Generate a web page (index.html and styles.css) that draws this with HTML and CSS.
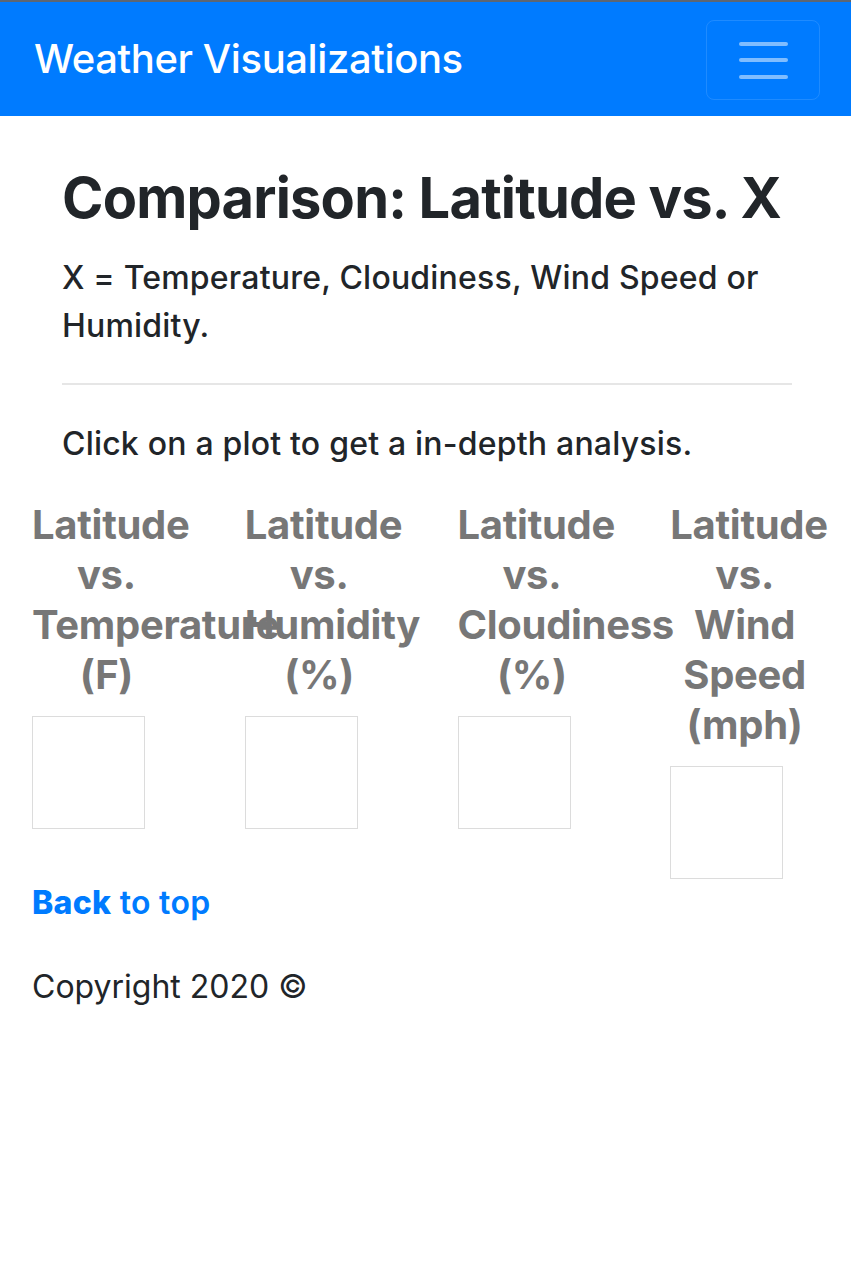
FILE: index.html
```html
<!DOCTYPE html>
<html lang="en">
<head>
<meta charset="utf-8">
<title>Weather Visualizations</title>
<link rel="stylesheet" href="styles.css">
</head>
<body>
<nav class="navbar">
  <a class="brand" href="#">Weather Visualizations</a>
  <button class="toggler" type="button" aria-label="Toggle navigation">
    <span class="bar"></span><span class="bar"></span><span class="bar"></span>
  </button>
</nav>
<main class="intro">
  <h3 class="title">Comparison: Latitude vs. X</h3>
  <p class="lead">X = Temperature, Cloudiness, Wind Speed or Humidity.</p>
  <hr class="rule">
  <p class="hint">Click on a plot to get a in-depth analysis.</p>
</main>
<section class="plots">
  <div class="plot">
    <h5 class="plot-title">Latitude vs. Temperature (F)</h5>
    <div class="thumb"></div>
  </div>
  <div class="plot">
    <h5 class="plot-title">Latitude vs. Humidity (%)</h5>
    <div class="thumb"></div>
  </div>
  <div class="plot">
    <h5 class="plot-title">Latitude vs. Cloudiness (%)</h5>
    <div class="thumb"></div>
  </div>
  <div class="plot">
    <h5 class="plot-title">Latitude vs. Wind Speed (mph)</h5>
    <div class="thumb"></div>
  </div>
</section>
<footer class="footer">
  <p class="back"><a href="#"><span class="back-strong">Back</span> to top</a></p>
  <p class="copy">Copyright 2020 ©</p>
</footer>
</body>
</html>
```
FILE: styles.css
```css
* { box-sizing: border-box; }
html, body { margin: 0; padding: 0; background: #fff; }
body {
  font-family: "Inter", "Roboto", "Liberation Sans", sans-serif;
  color: #212529;
  font-size: 32px;
  line-height: 48px;
}
.navbar {
  height: 116px;
  background: #007bff;
  border-top: 2px solid #5d6672;
  display: flex;
  align-items: center;
  justify-content: space-between;
  padding: 0 31px 0 34px;
}
.brand {
  color: #fff;
  text-decoration: none;
  font-size: 40px;
  font-weight: 500;
  letter-spacing: -0.4px;
  line-height: 48px;
}
.toggler {
  width: 114px;
  height: 80px;
  margin-top: 2px;
  background: transparent;
  border: 1.5px solid rgba(255,255,255,0.12);
  border-radius: 8px;
  display: flex;
  flex-direction: column;
  align-items: center;
  justify-content: center;
  gap: 12.5px;
  padding: 0;
}
.bar {
  display: block;
  width: 49px;
  height: 4px;
  border-radius: 2px;
  background: rgba(255,255,255,0.5);
}
.intro {
  padding: 0 59px 0 62px;
}
.title {
  margin: 49px 0 22px;
  font-size: 56px;
  line-height: 67px;
  font-weight: 700;
  letter-spacing: -0.8px;
}
.lead {
  margin: 0;
  font-weight: 500;
  letter-spacing: 0.2px;
}
.rule {
  margin: 33px 0 35px;
  border: 0;
  border-top: 2px solid #e6e6e6;
}
.hint {
  margin: 0 0 32px;
  font-weight: 500;
  letter-spacing: 0.2px;
}
.plots {
  display: grid;
  grid-template-columns: repeat(4, 1fr);
}
.plot {
  padding: 0 32px;
  min-width: 0;
}
.plot-title {
  margin: 0 0 16px;
  font-size: 40px;
  line-height: 50px;
  font-weight: 700;
  color: #777;
  text-align: center;
  letter-spacing: -0.3px;
}
.thumb {
  width: 113px;
  height: 113px;
  border: 1.5px solid #dcdcdc;
}
.footer {
  padding: 0 32px;
}
.back {
  margin: 0;
}
.back a {
  color: #007bff;
  text-decoration: none;
  font-weight: 600;
  letter-spacing: 0.3px;
}
.back-strong {
  font-weight: 800;
}
.copy {
  margin: 36px 0 0;
}
```
